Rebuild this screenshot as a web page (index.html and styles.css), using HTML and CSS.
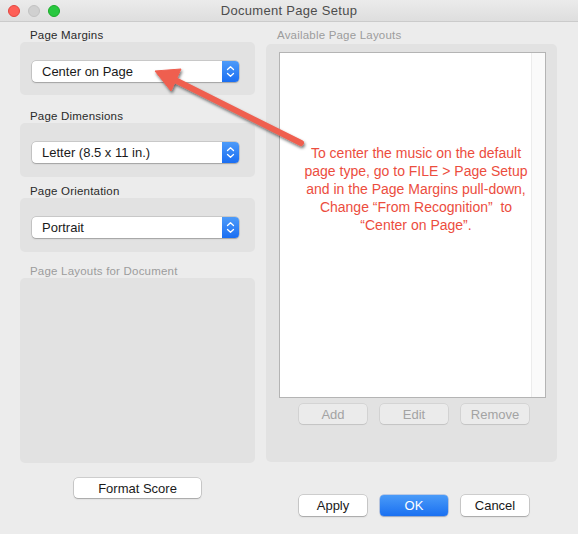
FILE: index.html
```html
<!DOCTYPE html>
<html lang="en">
<head>
<meta charset="UTF-8">
<title>Document Page Setup</title>
<link rel="stylesheet" href="styles.css">
</head>
<body>
<div class="window">

  <!-- Title bar -->
  <div class="titlebar">
    <div class="lights">
      <span class="light red"></span>
      <span class="light gray"></span>
      <span class="light green"></span>
    </div>
    <div class="title">Document Page Setup</div>
    <div></div>
  </div>

  <div class="content">
    <!-- Left column -->
    <div class="col-left">
      <div class="group-label">Page Margins</div>
      <div class="group-box first">
        <div class="select">
          <span class="select-text">Center on Page</span>
          <span class="stepper">
            <svg width="17" height="21" viewBox="0 0 17 21"><polyline points="5.5,8.5 8.5,5.8 11.5,8.5" /><polyline points="5.5,12.5 8.5,15.2 11.5,12.5" /></svg>
          </span>
        </div>
      </div>

      <div class="group-label dims">Page Dimensions</div>
      <div class="group-box">
        <div class="select">
          <span class="select-text">Letter (8.5 x 11 in.)</span>
          <span class="stepper">
            <svg width="17" height="21" viewBox="0 0 17 21"><polyline points="5.5,8.5 8.5,5.8 11.5,8.5" /><polyline points="5.5,12.5 8.5,15.2 11.5,12.5" /></svg>
          </span>
        </div>
      </div>

      <div class="group-label orient">Page Orientation</div>
      <div class="group-box">
        <div class="select">
          <span class="select-text">Portrait</span>
          <span class="stepper">
            <svg width="17" height="21" viewBox="0 0 17 21"><polyline points="5.5,8.5 8.5,5.8 11.5,8.5" /><polyline points="5.5,12.5 8.5,15.2 11.5,12.5" /></svg>
          </span>
        </div>
      </div>

      <div class="group-label docs disabled">Page Layouts for Document</div>
      <div class="group-box tall"></div>

      <button class="btn format-btn">Format Score</button>
    </div>

    <!-- Right column -->
    <div class="col-right">
      <div class="group-label disabled">Available Page Layouts</div>
      <div class="layouts-panel">
        <div class="layout-list">
          <div class="list-body"></div>
          <div class="list-scroll"></div>
        </div>
        <div class="btn-row">
          <button class="btn off">Add</button>
          <button class="btn off">Edit</button>
          <button class="btn off">Remove</button>
        </div>
      </div>
      <div class="btn-row footer">
        <button class="btn">Apply</button>
        <button class="btn primary">OK</button>
        <button class="btn">Cancel</button>
      </div>
    </div>
  </div>

  <!-- Annotation overlay -->
  <svg class="arrow" width="578" height="534" viewBox="0 0 578 534">
    <defs>
      <filter id="shadow" x="-20%" y="-20%" width="140%" height="140%">
        <feDropShadow dx="1" dy="2" stdDeviation="1.4" flood-color="#000" flood-opacity="0.55" />
      </filter>
    </defs>
    <g filter="url(#shadow)" fill="#ef5f50" stroke="#ef5f50">
      <line x1="173" y1="79" x2="301" y2="143" stroke-width="6" stroke-linecap="round" />
      <polygon points="155,71 181,69 171,91" stroke-width="1" stroke-linejoin="round" />
    </g>
  </svg>
  <div class="note">
    To center the music on the default<br>
    page type, go to FILE &gt; Page Setup<br>
    and in the Page Margins pull-down,<br>
    Change &ldquo;From Recognition&rdquo;&nbsp; to<br>
    &ldquo;Center on Page&rdquo;.
  </div>
</div>
</body>
</html>
```

FILE: styles.css
```css
/* Base */
body {
  margin: 0;
  font-family: "Liberation Sans", Arial, sans-serif;
  color: #222;
}

.window {
  position: relative;
  width: 578px;
  height: 534px;
  background: #ececec;
  overflow: hidden;
}

/* Title bar */
.titlebar {
  height: 21px;
  display: grid;
  grid-template-columns: 1fr auto 1fr;
  align-items: center;
  background: linear-gradient(180deg, #ebebeb 0%, #dedede 100%);
  border-bottom: 1px solid #cbcbcb;
}

.lights {
  display: flex;
  gap: 8px;
  padding-left: 8px;
}

.light {
  width: 12px;
  height: 12px;
  border-radius: 50%;
  box-sizing: border-box;
}

.light.red {
  background: #fe5f57;
  border: 1px solid #e2463f;
}

.light.gray {
  background: #d0d0d0;
  border: 1px solid #c2c2c2;
}

.light.green {
  background: #28c840;
  border: 1px solid #1aab29;
}

.title {
  font-size: 13px;
  color: #4d4d4d;
  letter-spacing: 0.3px;
}

/* Columns */
.content {
  display: flex;
  gap: 11px;
  padding: 6px 0 0 20px;
}

.col-left {
  width: 235px;
  display: flex;
  flex-direction: column;
}

.col-right {
  width: 291px;
  display: flex;
  flex-direction: column;
}

.group-label {
  height: 14px;
  line-height: 14px;
  font-size: 11.5px;
  color: #2a2a2a;
  padding-left: 10px;
  letter-spacing: 0.2px;
}

.group-label.dims {
  margin-top: 14px;
}

.group-label.orient {
  margin-top: 7px;
}

.group-label.docs {
  margin-top: 12px;
}

.group-label.disabled {
  color: #9c9c9c;
}

.col-right .group-label {
  padding-left: 11px;
  height: 15px;
}

.group-box {
  box-sizing: border-box;
  height: 54px;
  background: #e2e2e2;
  border-radius: 5px;
  padding: 19px 16px 0 12px;
}

.group-box.first {
  height: 53px;
}

.group-box.tall {
  height: 185px;
}

/* Pop-up button */
.select {
  display: flex;
  height: 21px;
  background: #fff;
  border-radius: 4px;
  box-shadow: 0 0 0 0.5px rgba(0, 0, 0, 0.22), 0 1px 1.5px rgba(0, 0, 0, 0.2);
  overflow: hidden;
}

.select-text {
  flex: 1;
  font-size: 13px;
  line-height: 21px;
  padding-left: 10px;
  color: #1a1a1a;
}

.stepper {
  width: 17px;
  background: linear-gradient(180deg, #4d9bf9 0%, #1a6ef2 100%);
}

.stepper svg {
  display: block;
  fill: none;
  stroke: #fff;
  stroke-width: 1.3;
  stroke-linecap: round;
  stroke-linejoin: round;
}

/* Right panel */
.layouts-panel {
  box-sizing: border-box;
  height: 418px;
  margin-top: 1px;
  background: #e2e2e2;
  border-radius: 5px;
  padding: 8px 11px 0 13px;
}

.layout-list {
  display: flex;
  height: 346px;
  box-sizing: border-box;
  border: 1px solid #b4b4b4;
  background: #fff;
}

.list-body {
  flex: 1;
}

.list-scroll {
  width: 13px;
  background: #fafafa;
  border-left: 1px solid #ececec;
}

/* Buttons */
.btn-row {
  display: flex;
  gap: 13px;
  margin-top: 6px;
  padding-left: 20px;
}

.btn-row.footer {
  margin-top: 33px;
  padding-left: 33px;
}

.btn {
  box-sizing: border-box;
  width: 68px;
  height: 21px;
  padding: 0;
  font-family: "Liberation Sans", Arial, sans-serif;
  font-size: 13px;
  color: #1a1a1a;
  background: #fff;
  border: none;
  border-radius: 4px;
  box-shadow: 0 0 0 0.5px rgba(0, 0, 0, 0.25), 0 1px 1.5px rgba(0, 0, 0, 0.2);
}

.btn.off {
  height: 20px;
  color: #a3a3a3;
  background: #ebebeb;
  box-shadow: 0 0 0 0.5px rgba(0, 0, 0, 0.12), 0 1px 1px rgba(0, 0, 0, 0.08);
}

.btn.primary {
  color: #fff;
  background: linear-gradient(180deg, #4a9bf8 0%, #1a70f1 100%);
  box-shadow: 0 0 0 0.5px rgba(0, 70, 200, 0.4), 0 1px 1.5px rgba(0, 0, 0, 0.2);
}

.format-btn {
  width: 127px;
  height: 20px;
  margin-top: 15px;
  align-self: center;
}

/* Annotation */
.arrow {
  position: absolute;
  left: 0;
  top: 0;
  pointer-events: none;
}

.note {
  position: absolute;
  left: 298px;
  top: 144px;
  width: 236px;
  text-align: center;
  font-size: 14px;
  line-height: 18px;
  color: #ec4d3e;
}
```
